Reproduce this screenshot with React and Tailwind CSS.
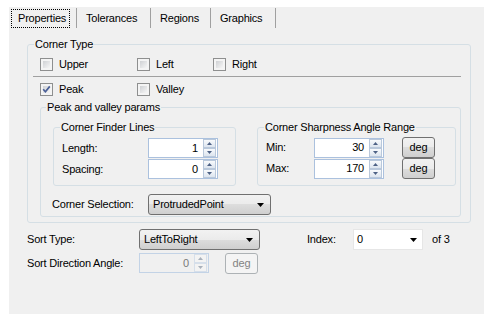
import React from "react";

const BTN_BG = "bg-[linear-gradient(#f2f2f2,#ebebeb_50%,#dddddd_50%,#cfcfcf)]";

function Check({ checked }) {
  return (
    <div className="relative w-[13px] h-[13px] shrink-0 border border-[#8e8f8f] bg-[#f4f4f4] p-[2px]">
      <div className="w-full h-full bg-gradient-to-br from-[#cfd1d4] to-[#f6f6f6]"></div>
      {checked && (
        <svg className="absolute left-0 top-0" width="11" height="11" viewBox="0 0 11 11">
          <path d="M2.2 5.3 L4.4 7.8 L8.8 2.4" stroke="#4a5f97" strokeWidth="1.7" fill="none" />
        </svg>
      )}
    </div>
  );
}

function CheckItem({ checked, label, w }) {
  return (
    <div className={`flex items-center gap-[6px] ${w}`}>
      <Check checked={checked} />
      <span>{label}</span>
    </div>
  );
}

function SpinBtn({ up, disabled }) {
  return (
    <div
      className={`h-[9px] flex items-center justify-center border ${
        disabled
          ? "border-[#d6dfea] bg-[#f3f3f3]"
          : "border-[#b9c8db] bg-gradient-to-b from-[#f8fafc] to-[#dde5ef]"
      }`}
    >
      <svg width="5" height="3" viewBox="0 0 5 3">
        <path d={up ? "M0 3 L2.5 0 L5 3 Z" : "M0 0 L2.5 3 L5 0 Z"} fill={disabled ? "#a8b0bb" : "#4d6185"} />
      </svg>
    </div>
  );
}

function Spin({ value, disabled }) {
  return (
    <div
      className={`w-[70px] h-[20px] shrink-0 flex items-center border ${
        disabled ? "border-[#c3d3e6] bg-[#f0f0f0]" : "border-[#abc1de] bg-white"
      }`}
    >
      <div className={`flex-1 text-right pr-[5px] leading-[13px] ${disabled ? "text-[#7a7a7a]" : "text-black"}`}>
        {value}
      </div>
      <div className="w-[13px] h-[18px] mr-px flex flex-col">
        <SpinBtn up disabled={disabled} />
        <SpinBtn disabled={disabled} />
      </div>
    </div>
  );
}

function Deg({ disabled }) {
  return (
    <div
      className={`w-[33px] h-[21px] shrink-0 rounded-[3px] border flex items-center justify-center ${
        disabled ? "border-[#adb2b5] bg-[#f4f4f4] text-[#838383]" : `border-[#707070] ${BTN_BG} text-black`
      }`}
    >
      deg
    </div>
  );
}

function Arrow() {
  return (
    <svg width="7" height="4" viewBox="0 0 7 4">
      <path d="M0 0 L7 0 L3.5 4 Z" fill="#000" />
    </svg>
  );
}

function Combo({ text, w }) {
  return (
    <div
      className={`${w} h-[21px] shrink-0 rounded-[3px] border border-[#707070] ${BTN_BG} flex items-center justify-between pl-[4px] pr-[6px]`}
    >
      <span>{text}</span>
      <Arrow />
    </div>
  );
}

function Legend({ children, ml = "ml-[6px]" }) {
  return <legend className={`${ml} px-[1px] leading-[13px]`}>{children}</legend>;
}

export default function App() {
  return (
    <div className="w-[487px] h-[318px] bg-white overflow-hidden pt-[7px] pl-[9px] font-['Liberation_Sans',Arial,sans-serif] text-[11px] tracking-[-0.2px] text-black leading-[13px]">
      <div className="w-[475px] h-[307px] bg-[#f0f0f0]">
        {/* Tabs */}
        <div className="flex h-[22px]">
          <div className="relative w-[68px] flex items-center">
            <div className="absolute left-[2px] top-[2px] w-[59px] h-[19px] border border-dotted border-black"></div>
            <span className="flex-1 pl-[9px]">Properties</span>
            <div className="w-px h-[20px] bg-[#a0a0a0]"></div>
          </div>
          <div className="w-[74px] flex items-center">
            <span className="flex-1 pl-[9px]">Tolerances</span>
            <div className="w-px h-[20px] bg-[#a0a0a0]"></div>
          </div>
          <div className="w-[60px] flex items-center">
            <span className="flex-1 pl-[9px]">Regions</span>
            <div className="w-px h-[20px] bg-[#a0a0a0]"></div>
          </div>
          <div className="w-[65px] flex items-center">
            <span className="flex-1 pl-[9px]">Graphics</span>
            <div className="w-px h-[20px] bg-[#a0a0a0]"></div>
          </div>
        </div>

        {/* Corner Type */}
        <fieldset className="mt-[9px] ml-[18px] w-[444px] h-[185px] border border-[#d5dfe5] rounded-[3px]">
          <Legend>Corner Type</Legend>
          <div className="mt-[7px] ml-[12px] flex h-[13px] items-center">
            <CheckItem label="Upper" w="w-[97px]" />
            <CheckItem label="Left" w="w-[76px]" />
            <CheckItem label="Right" />
          </div>
          <div className="mt-[5px] ml-[5px] w-[428px] h-px bg-[#a0a0a0]"></div>
          <div className="mt-[6px] ml-[12px] flex h-[13px] items-center">
            <CheckItem checked label="Peak" w="w-[97px]" />
            <CheckItem label="Valley" />
          </div>

          {/* Peak and valley params */}
          <fieldset className="mt-[5px] ml-[12px] w-[421px] h-[116px] border border-[#d5dfe5] rounded-[3px]">
            <Legend ml="ml-[5px]">Peak and valley params</Legend>
            <div className="mt-[7px] flex">
              <fieldset className="ml-[12px] w-[183px] h-[65px] border border-[#d5dfe5] rounded-[3px]">
                <Legend>Corner Finder Lines</Legend>
                <div className="mt-[4px] flex items-center h-[20px]">
                  <span className="pl-[8px] w-[94px]">Length:</span>
                  <Spin value="1" />
                </div>
                <div className="mt-[1px] flex items-center h-[20px]">
                  <span className="pl-[8px] w-[94px]">Spacing:</span>
                  <Spin value="0" />
                </div>
              </fieldset>
              <fieldset className="ml-[21px] w-[199px] h-[65px] border border-[#d5dfe5] rounded-[3px]">
                <Legend>Corner Sharpness Angle Range</Legend>
                <div className="mt-[3px] flex items-center h-[21px]">
                  <span className="pl-[8px] w-[56px]">Min:</span>
                  <Spin value="30" />
                  <div className="ml-[18px]">
                    <Deg />
                  </div>
                </div>
                <div className="flex items-center h-[21px]">
                  <span className="pl-[8px] w-[56px]">Max:</span>
                  <Spin value="170" />
                  <div className="ml-[18px]">
                    <Deg />
                  </div>
                </div>
              </fieldset>
            </div>
            <div className="mt-[8px] flex items-center h-[21px]">
              <span className="pl-[11px] w-[107px]">Corner Selection:</span>
              <Combo text="ProtrudedPoint" w="w-[123px]" />
            </div>
          </fieldset>
        </fieldset>

        {/* Sort rows */}
        <div className="mt-[6px] ml-[18px] flex items-center h-[21px]">
          <span className="w-[112px]">Sort Type:</span>
          <Combo text="LeftToRight" w="w-[121px]" />
          <span className="ml-[47px] w-[46px]">Index:</span>
          <div className="w-[70px] h-[21px] border border-[#e6e6e6] bg-white flex items-center justify-between pl-[3px] pr-[5px]">
            <span>0</span>
            <Arrow />
          </div>
          <span className="ml-[9px]">of 3</span>
        </div>
        <div className="mt-[3px] ml-[18px] flex items-center h-[20px]">
          <span className="w-[112px]">Sort Direction Angle:</span>
          <Spin value="0" disabled />
          <div className="ml-[16px]">
            <Deg disabled />
          </div>
        </div>
      </div>
    </div>
  );
}
